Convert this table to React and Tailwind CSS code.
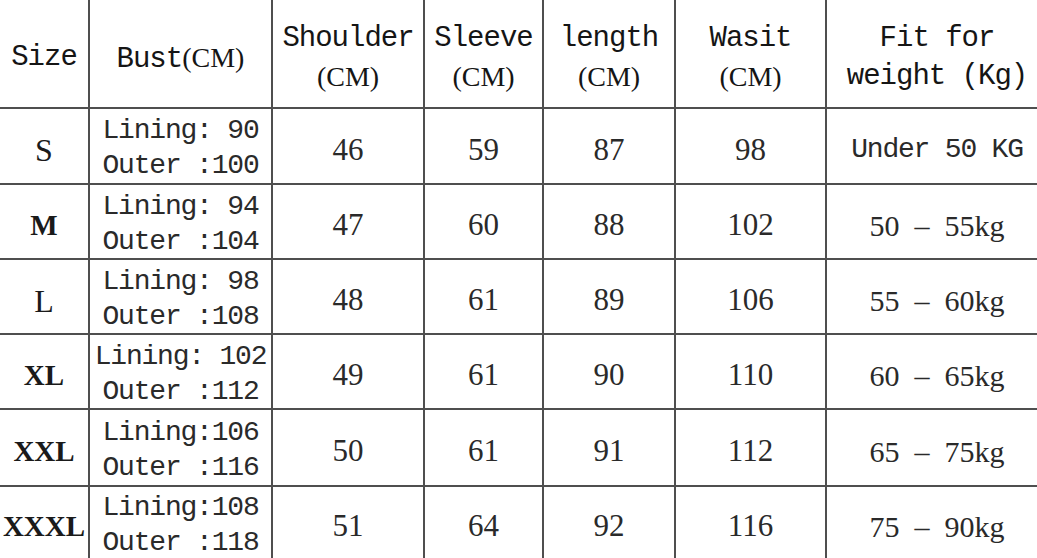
import React from "react";

const mono = "font-['Liberation_Mono','DejaVu_Sans_Mono',monospace]";
const serif = "font-['Liberation_Serif','DejaVu_Serif',serif]";

const rows = [
  { size: "S", bold: false, lining: "Lining: 90", outer: "Outer :100", shoulder: 46, sleeve: 59, length: 87, waist: 98, fit: "Under 50 KG" },
  { size: "M", bold: true, lining: "Lining: 94", outer: "Outer :104", shoulder: 47, sleeve: 60, length: 88, waist: 102, fit: "50  –  55kg" },
  { size: "L", bold: false, lining: "Lining: 98", outer: "Outer :108", shoulder: 48, sleeve: 61, length: 89, waist: 106, fit: "55  –  60kg" },
  { size: "XL", bold: true, lining: "Lining: 102", outer: "Outer :112", shoulder: 49, sleeve: 61, length: 90, waist: 110, fit: "60  –  65kg" },
  { size: "XXL", bold: true, lining: "Lining:106", outer: "Outer :116", shoulder: 50, sleeve: 61, length: 91, waist: 112, fit: "65  –  75kg" },
  { size: "XXXL", bold: true, lining: "Lining:108", outer: "Outer :118", shoulder: 51, sleeve: 64, length: 92, waist: 116, fit: "75  –  90kg" },
];

function Cell({ children, className = "" }) {
  return (
    <div className={`bg-white flex flex-col items-center justify-center text-center whitespace-pre ${className}`}>
      {children}
    </div>
  );
}

function Head({ top, bottom, className = "" }) {
  return (
    <Cell className={`pt-[9px] text-[29px] tracking-[-1px] leading-[38px] text-[#151515] ${className}`}>
      <span className={mono}>{top}</span>
      {bottom && <span className={`${serif} tracking-normal text-[28px]`}>{bottom}</span>}
    </Cell>
  );
}

export default function App() {
  return (
    <div className="w-[1037px] h-[558px] bg-white overflow-hidden">
      <div className="grid w-full h-full gap-[2px] bg-[#4f4f4f] grid-cols-[88px_181px_150px_117px_130px_149px_210px] grid-rows-[107px_74px_73px_73px_73px_75px_71px]">
        <Head top="Size" />
        <Cell className="pt-[9px] text-[29px] leading-[38px] text-[#151515]">
          <span>
            <span className={`${mono} tracking-[-1px]`}>Bust</span>
            <span className={`${serif} text-[28px]`}>(CM)</span>
          </span>
        </Cell>
        <Head top="Shoulder" bottom="(CM)" />
        <Head top="Sleeve" bottom="(CM)" />
        <Head top="length" bottom="(CM)" />
        <Head top="Wasit" bottom="(CM)" />
        <Cell className={`pt-[9px] pl-[10px] text-[29px] tracking-[-1px] leading-[38px] text-[#151515] ${mono}`}>
          <span>Fit for</span>
          <span>weight (Kg)</span>
        </Cell>

        {rows.map((r) => (
          <React.Fragment key={r.size}>
            <Cell className={`${serif} pt-2 text-[#1a1a1a] ${r.bold ? "font-bold text-[29px]" : "text-[32px]"}`}>{r.size}</Cell>
            <Cell className={`${mono} pt-[4px] text-[28px] tracking-[-1.2px] leading-[35px] text-[#2a2a2a]`}>
              <span>{r.lining}</span>
              <span>{r.outer}</span>
            </Cell>
            <Cell className={`${serif} pt-2 text-[31px] text-[#2a2a2a]`}>{r.shoulder}</Cell>
            <Cell className={`${serif} pt-2 text-[31px] text-[#2a2a2a]`}>{r.sleeve}</Cell>
            <Cell className={`${serif} pt-2 text-[31px] text-[#2a2a2a]`}>{r.length}</Cell>
            <Cell className={`${serif} pt-2 text-[31px] text-[#2a2a2a]`}>{r.waist}</Cell>
            <Cell
              className={`pt-2 pl-[10px] text-[#2a2a2a] ${
                r.fit.startsWith("Under") ? `${mono} text-[28px] tracking-[-1.2px]` : `${serif} text-[30px]`
              }`}
            >
              {r.fit}
            </Cell>
          </React.Fragment>
        ))}
      </div>
    </div>
  );
}
